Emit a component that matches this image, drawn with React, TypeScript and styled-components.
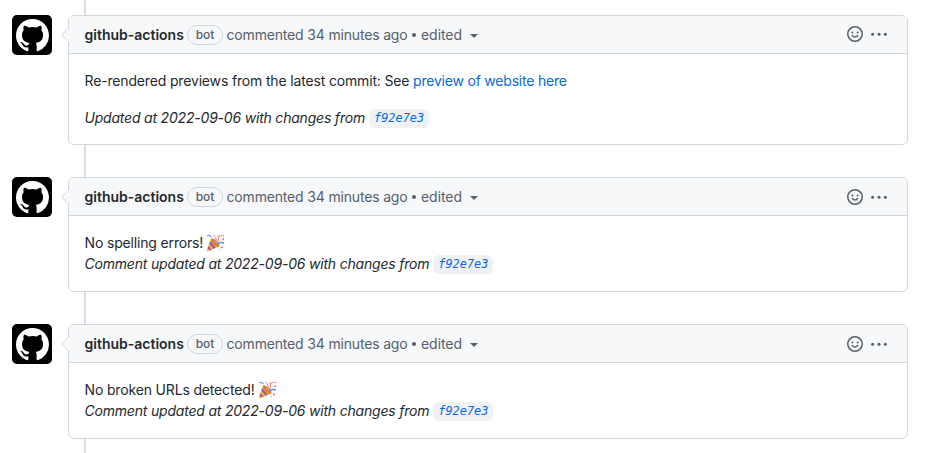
import React from "react";
import styled, { createGlobalStyle } from "styled-components";

const GlobalStyle = createGlobalStyle`
  * { box-sizing: border-box; }
  body {
    margin: 0;
    background: #fff;
    color: #24292f;
    font: 14px/21px Inter, "Liberation Sans", sans-serif;
    overflow: hidden;
  }
`;

const Timeline = styled.main`
  position: relative;
  display: flex;
  flex-direction: column;
  gap: 32px;
  height: 453px;
  padding: 15px 18px 0 12px;
  overflow: hidden;
  &::before {
    content: "";
    position: absolute;
    left: 84px;
    top: 0;
    bottom: 0;
    width: 2px;
    background: #d8dee4;
  }
`;

const Row = styled.article`
  display: flex;
  align-items: flex-start;
  gap: 16px;
`;

const Avatar = styled.div`
  position: relative;
  display: flex;
  align-items: center;
  justify-content: center;
  width: 40px;
  height: 40px;
  border-radius: 5px;
  background: #000;
  svg { display: block; }
`;

const Card = styled.section<{ $height: number }>`
  position: relative;
  width: 840px;
  height: ${(p) => p.$height}px;
  border: 1px solid #d0d7de;
  border-radius: 6px;
  background: #fff;
`;

const Pointer = styled.svg`
  position: absolute;
  left: -8px;
  top: 10px;
  display: block;
`;

const Header = styled.header<{ $lift: number }>`
  display: flex;
  align-items: center;
  height: 38px;
  padding: 0 20px ${(p) => p.$lift}px 15.5px;
  border-bottom: 1px solid #d0d7de;
  border-radius: 5px 5px 0 0;
  background: #f6f8fa;
  color: #57606a;
  white-space: nowrap;
`;

const Author = styled.strong`
  width: 102.5px;
  color: #24292f;
  font-weight: 600;
`;

const Badge = styled.span`
  width: 36px;
  height: 20px;
  margin: 1px 3.5px 0 0;
  border: 1px solid #d0d7de;
  border-radius: 10px;
  font-size: 12px;
  font-weight: 500;
  line-height: 18px;
  text-align: center;
`;

const Meta = styled.span`
  flex: 1;
  display: flex;
  align-items: center;
  letter-spacing: -0.17px;
`;

const Dot = styled.i`
  width: 4px;
  height: 4px;
  margin: 1px 5px 0 4.5px;
  border-radius: 50%;
  background: #57606a;
`;

const Edited = styled.span`
  letter-spacing: -0.05px;
`;

const Caret = styled.i`
  margin: 3px 0 0 8px;
  border: 4px solid transparent;
  border-top-color: #57606a;
  border-bottom: 0;
`;

const Actions = styled.div`
  display: flex;
  align-items: center;
  gap: 8px;
  svg { display: block; }
`;

const Body = styled.div`
  display: flex;
  flex-direction: column;
  padding: 16px 15.5px;
`;

const Line = styled.p<{ $gap?: number; $italic?: boolean }>`
  display: flex;
  align-items: center;
  height: 21px;
  margin: 0 0 ${(p) => p.$gap ?? 0}px;
  font-style: ${(p) => (p.$italic ? "italic" : "normal")};
  letter-spacing: ${(p) => (p.$italic ? "-0.2px" : "-0.16px")};
  white-space: pre;
`;

const Link = styled.a`
  color: #0969da;
  letter-spacing: -0.21px;
`;

const Commit = styled.code`
  height: 19px;
  margin: 1px 0 0 4px;
  padding: 0 5px;
  border-radius: 6px;
  background: #eff1f3;
  color: #0969da;
  font: italic 11.9px/18px "DejaVu Sans Mono", monospace;
  letter-spacing: 0;
`;

const Emoji = styled.svg`
  display: block;
  margin-left: 3px;
`;

const MARK =
  "M8 0C3.58 0 0 3.58 0 8c0 3.54 2.29 6.53 5.47 7.59.4.07.55-.17.55-.38 0-.19-.01-.82-.01-1.49-2.01.37-2.53-.49-2.69-.94-.09-.23-.48-.94-.82-1.13-.28-.15-.68-.52-.01-.53.63-.01 1.08.58 1.23.82.72 1.21 1.87.87 2.33.66.07-.52.28-.87.51-1.07-1.78-.2-3.64-.89-3.64-3.95 0-.87.31-1.59.82-2.15-.08-.2-.36-1.02.08-2.12 0 0 .67-.21 2.2.82.64-.18 1.32-.27 2-.27.68 0 1.36.09 2 .27 1.53-1.04 2.2-.82 2.2-.82.44 1.1.16 1.92.08 2.12.51.56.82 1.27.82 2.15 0 3.07-1.87 3.75-3.65 3.95.29.25.54.73.54 1.48 0 1.07-.01 1.93-.01 2.2 0 .21.15.46.55.38A8.013 8.013 0 0016 8c0-4.42-3.58-8-8-8z";

const Party = () => (
  <Emoji width="19" height="18" viewBox="0 0 19 18">
    <path d="M5 4.5 13.5 12.5 1.8 17.2Q.4 17.5.8 16Z" fill="#f7b731" />
    <path d="M4.3 7 9.8 13.8 7.6 14.8 3.4 9.8ZM2.5 12 5.6 15.6 3.8 16.4 1.7 14.3Z" fill="#a156b4" />
    <ellipse cx="9.2" cy="8.6" rx="2.2" ry="5.6" transform="rotate(-45 9.2 8.6)" fill="#cf8428" />
    <path d="M8.5 8.5Q11.5 6 9 2.5" fill="none" stroke="#e98aa8" strokeWidth="1.2" />
    <path d="M10 9.5Q13 7 12.5 4.5T16.5 1" fill="none" stroke="#ef8d9b" strokeWidth="1.2" />
    <path d="M11 10.5Q13.5 7.5 18 9" fill="none" stroke="#5b91e3" strokeWidth="1.5" />
    <path d="M1.2 2Q3.8.5 5.5 3.2" fill="none" stroke="#7aa4e8" strokeWidth="1.3" />
    <path d="m7 .8 1.8.5-.6 1.4ZM16 5l2-.7.3 1.5-1.7.6ZM15 12.5l2.2.3-.5 1.6-1.9-.5Z" fill="#e86b8c" />
    <path d="m11.3 1.2 1.5.4-.6 1.4-1.4-.5ZM14.5 6.5l1.2.5-.7 1.1Z" fill="#f5b84b" />
    <path d="m17 .5 1.3 1-1.2 1.2ZM12.5 14.8l1.4.3-.6 1.3Z" fill="#7394dd" />
  </Emoji>
);

interface CommentProps {
  height: number;
  lift?: number;
  children: React.ReactNode;
}

const Comment = ({ height, lift = 0, children }: CommentProps) => (
  <Row>
    <Avatar>
      <svg width="33" height="33" viewBox="0 0 16 16">
        <path fill="#fff" d={MARK} />
      </svg>
    </Avatar>
    <Card $height={height}>
      <Pointer width="9" height="18" viewBox="0 0 9 18">
        <path d="M9 1 1 9l8 8" fill="#f6f8fa" />
        <path d="M8 1.5.8 9 8 16.5" fill="none" stroke="#d0d7de" />
      </Pointer>
      <Header $lift={lift}>
        <Author>github-actions</Author>
        <Badge>bot</Badge>
        <Meta>
          commented 34 minutes ago
          <Dot />
          <Edited>edited</Edited>
          <Caret />
        </Meta>
        <Actions>
          <svg width="16" height="16" viewBox="0 0 16 16" fill="none" stroke="#57606a" strokeWidth="1.5">
            <circle cx="8" cy="8" r="7.25" />
            <path d="M5.3 9.6Q8 12.6 10.7 9.6" strokeLinecap="round" />
            <circle cx="5.4" cy="6.4" r="1" fill="#57606a" stroke="none" />
            <circle cx="10.6" cy="6.4" r="1" fill="#57606a" stroke="none" />
          </svg>
          <svg width="16" height="16" viewBox="0 0 16 16" fill="#57606a">
            <circle cx="1.6" cy="8.3" r="1.5" />
            <circle cx="8" cy="8.3" r="1.5" />
            <circle cx="14.4" cy="8.3" r="1.5" />
          </svg>
        </Actions>
      </Header>
      <Body>{children}</Body>
    </Card>
  </Row>
);

export default function App() {
  return (
    <>
      <GlobalStyle />
      <Timeline>
        <Comment height={130} lift={1}>
          <Line $gap={16}>
            Re-rendered previews from the latest commit: See <Link>preview of website here</Link>
          </Line>
          <Line $italic>
            Updated at 2022-09-06 with changes from<Commit>f92e7e3</Commit>
          </Line>
        </Comment>
        <Comment height={115}>
          <Line>
            No spelling errors!<Party />
          </Line>
          <Line $italic>
            Comment updated at 2022-09-06 with changes from<Commit>f92e7e3</Commit>
          </Line>
        </Comment>
        <Comment height={115}>
          <Line>
            No broken URLs detected!<Party />
          </Line>
          <Line $italic>
            Comment updated at 2022-09-06 with changes from<Commit>f92e7e3</Commit>
          </Line>
        </Comment>
      </Timeline>
    </>
  );
}
